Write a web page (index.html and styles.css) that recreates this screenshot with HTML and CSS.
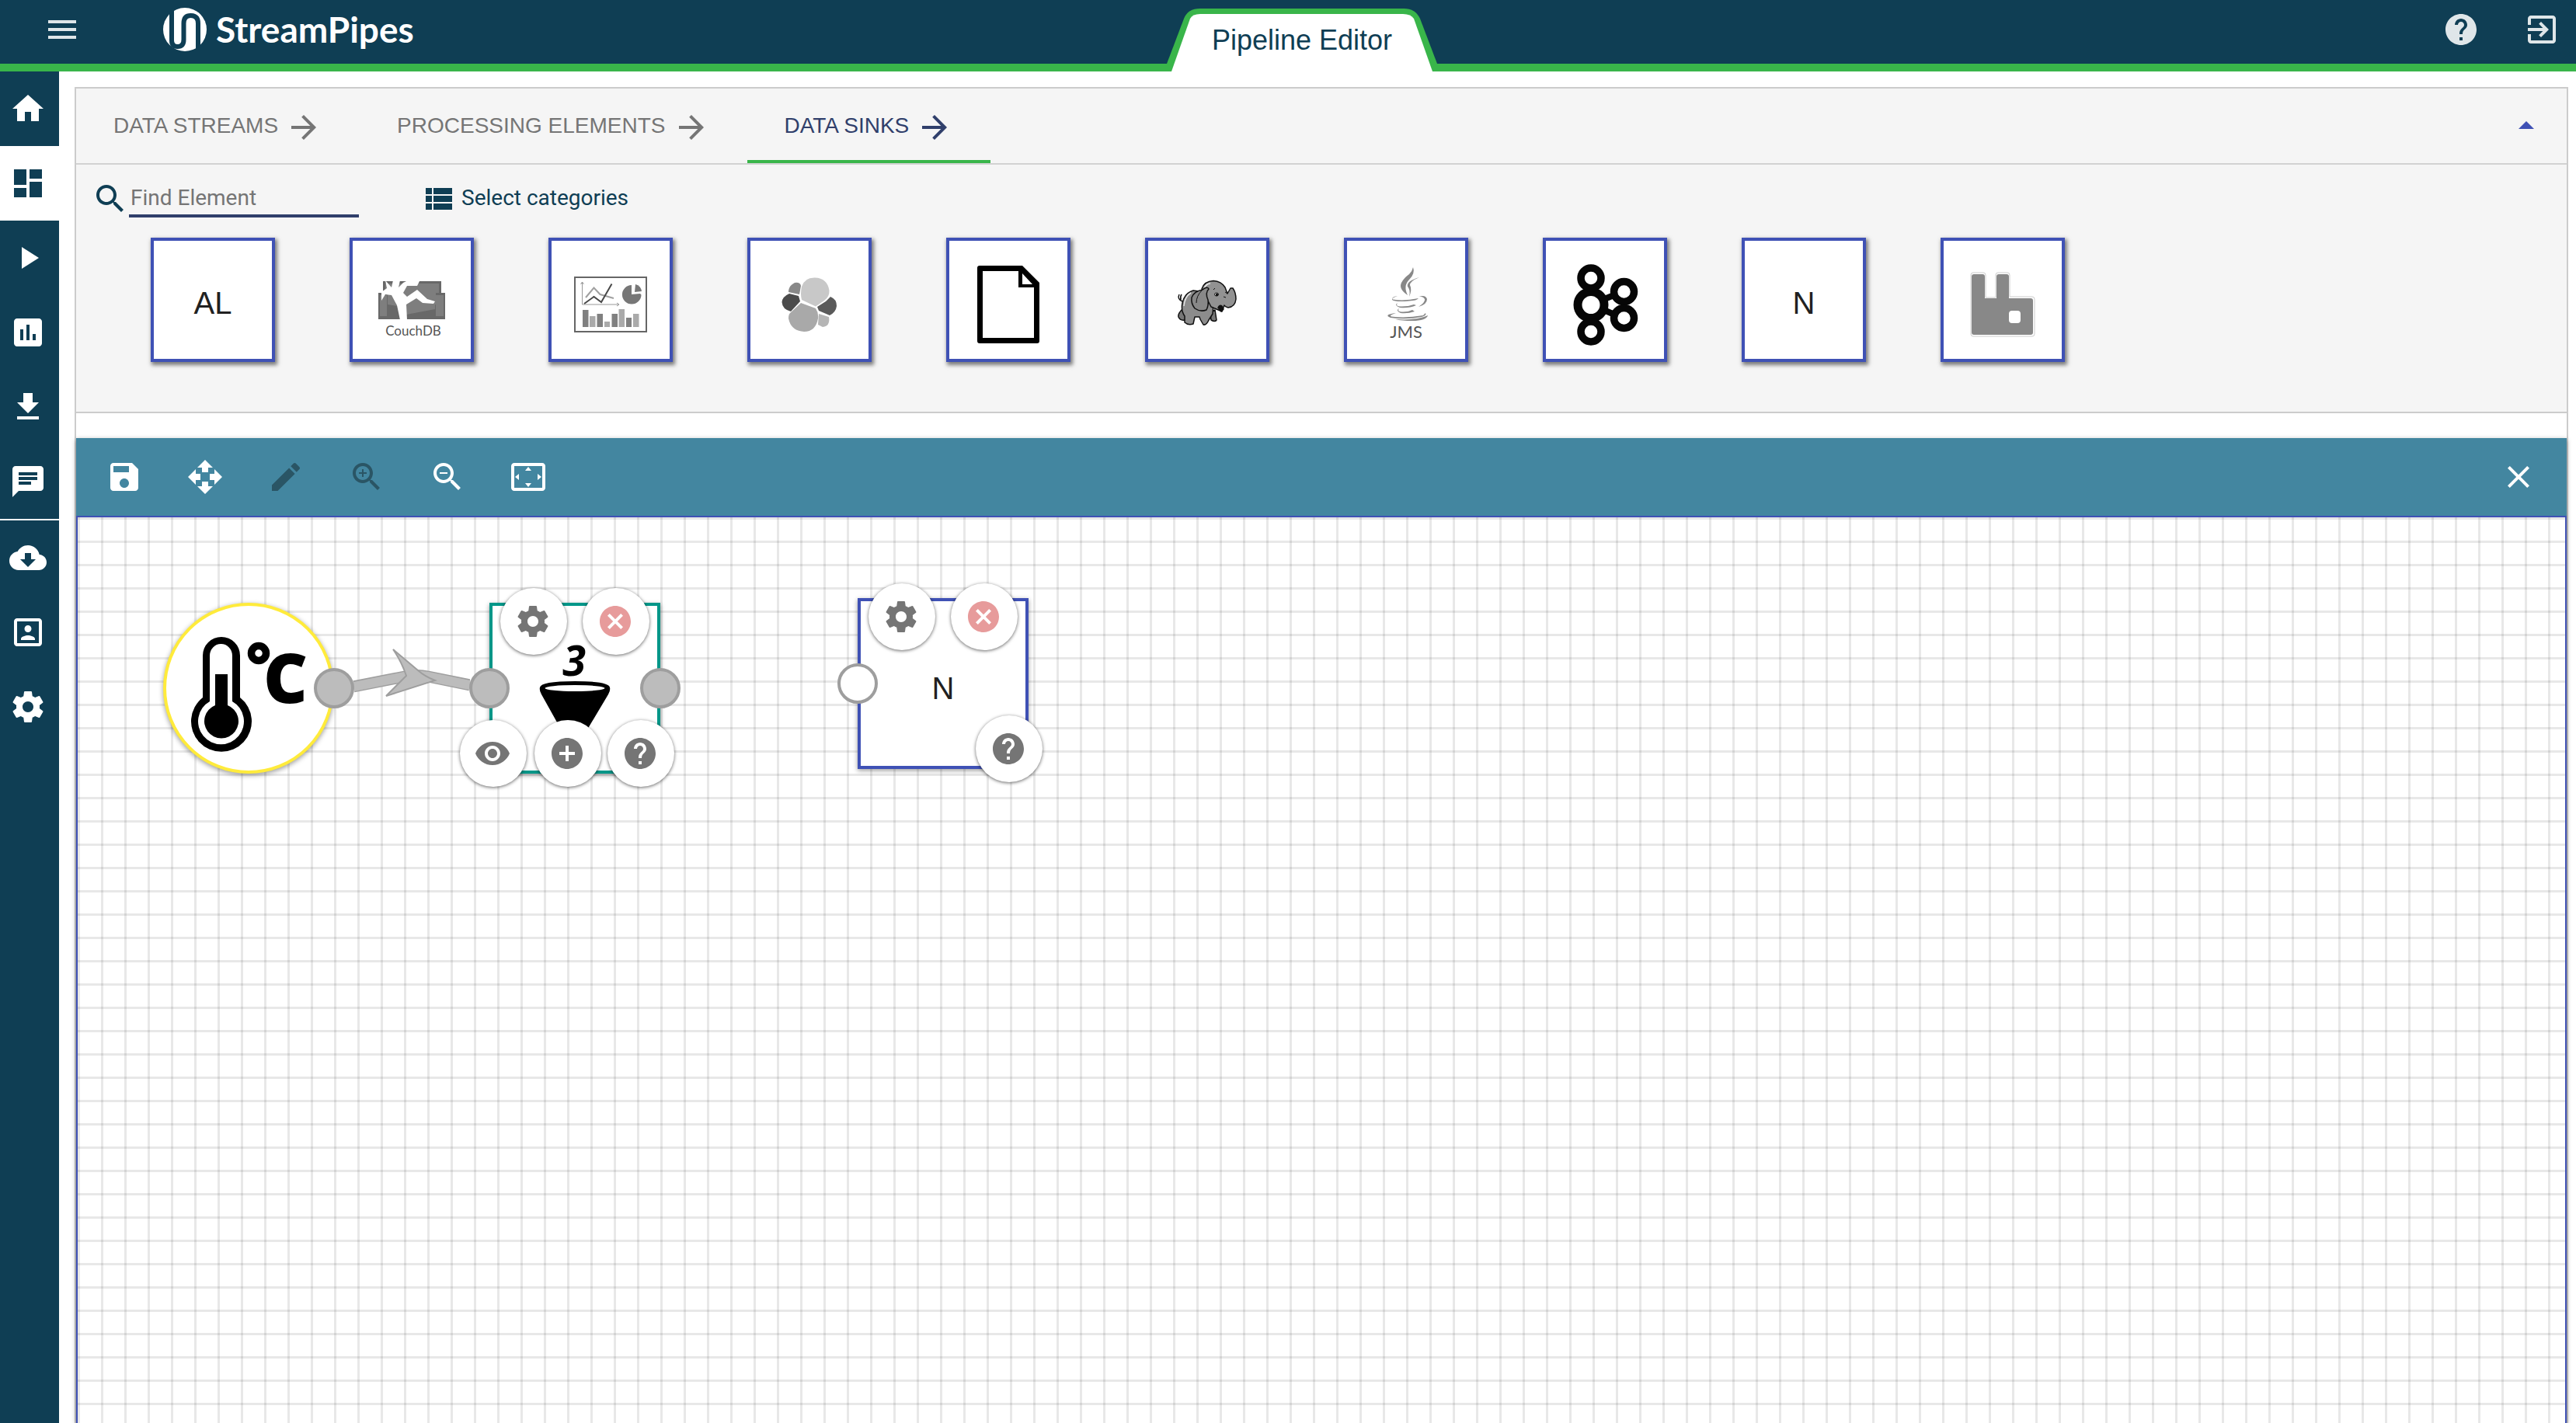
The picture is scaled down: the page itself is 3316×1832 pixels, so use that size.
FILE: index.html
```html
<!DOCTYPE html>
<html lang="en">
<head>
<meta charset="utf-8">
<title>StreamPipes - Pipeline Editor</title>
<link rel="stylesheet" href="styles.css">
</head>
<body>
<svg class="sprite" aria-hidden="true">
  <symbol id="i-gear" viewBox="0 0 24 24"><path d="M19.43 12.98c.04-.32.07-.64.07-.98s-.03-.66-.07-.98l2.11-1.65c.19-.15.24-.42.12-.64l-2-3.46c-.12-.22-.39-.3-.61-.22l-2.49 1c-.52-.4-1.08-.73-1.69-.98l-.38-2.65C14.46 2.18 14.25 2 14 2h-4c-.25 0-.46.18-.49.42l-.38 2.65c-.61.25-1.17.59-1.69.98l-2.49-1c-.23-.09-.49 0-.61.22l-2 3.46c-.13.22-.07.49.12.64l2.11 1.65c-.04.32-.07.65-.07.98s.03.66.07.98l-2.11 1.65c-.19.15-.24.42-.12.64l2 3.46c.12.22.39.3.61.22l2.49-1c.52.4 1.08.73 1.69.98l.38 2.65c.03.24.24.42.49.42h4c.25 0 .46-.18.49-.42l.38-2.65c.61-.25 1.17-.59 1.69-.98l2.49 1c.23.09.49 0 .61-.22l2-3.46c.12-.22.07-.49-.12-.64l-2.11-1.65zM12 15.5c-1.93 0-3.5-1.57-3.5-3.5s1.57-3.5 3.5-3.5 3.5 1.57 3.5 3.5-1.57 3.5-3.5 3.5z"/></symbol>
  <symbol id="i-help" viewBox="0 0 24 24"><path d="M12 2C6.48 2 2 6.48 2 12s4.480 10 10 10 10-4.480 10-10S17.520 2 12 2zm1 17h-2v-2h2v2zm2.070-7.750l-.9.920C13.450 12.900 13 13.500 13 15h-2v-.5c0-1.100.450-2.100 1.170-2.830l1.240-1.260c.370-.360.590-.860.590-1.410 0-1.100-.9-2-2-2s-2 .9-2 2H8c0-2.210 1.790-4 4-4s4 1.790 4 4c0 .880-.360 1.680-.930 2.250z"/></symbol>
  <symbol id="i-cancel" viewBox="0 0 24 24"><path d="M12 2C6.470 2 2 6.470 2 12s4.470 10 10 10 10-4.470 10-10S17.530 2 12 2zm5 13.590L15.590 17 12 13.410 8.410 17 7 15.590 10.590 12 7 8.410 8.410 7 12 10.590 15.590 7 17 8.410 13.410 12 17 15.590z"/></symbol>
  <symbol id="i-arrow" viewBox="0 0 24 24"><path d="M12 4l-1.410 1.410L16.170 11H4v2h12.170l-5.580 5.590L12 20l8-8z"/></symbol>
</svg>

<header class="topbar">
  <div class="brand">
    <button class="icon-btn" aria-label="Toggle menu"><svg class="icon" viewBox="0 0 24 24"><path d="M3 18h18v-2H3v2zm0-5h18v-2H3v2zm0-7v2h18V6H3z"/></svg></button>
    <a class="logo" href="#">
      <svg class="logo-mark" viewBox="0 0 56 56" aria-hidden="true">
        <circle cx="28" cy="28" r="28" fill="#fff"/>
        <path class="cut" d="M11 -2V42Q11 50 18.500 50 26.500 50 26.500 41V20Q26.500 10 35.500 10 45 10 45 20V58"/>
      </svg>
      <span class="logo-text">StreamPipes</span>
    </a>
  </div>
  <div class="page-tab">
    <svg class="page-tab-shape" viewBox="0 0 348 92" aria-hidden="true">
      <path fill="#39b54a" d="M0 82 22 24Q27 11 43 11H305Q320 11 326 24L348 82V92H0Z"/>
      <path fill="#fff" d="M6 92 30 24Q33 18 43 18H304Q314 18 318 24L342 92Z"/>
    </svg>
    <h1 class="page-title">Pipeline Editor</h1>
  </div>
  <div class="topbar-actions">
    <button class="icon-btn" aria-label="Help"><svg class="icon"><use href="#i-help"/></svg></button>
    <button class="icon-btn" aria-label="Log out"><svg class="icon" viewBox="0 0 24 24"><path d="M10.090 15.590L11.500 17l5-5-5-5-1.410 1.410L12.670 11H3v2h9.670l-2.580 2.590zM19 3H5c-1.110 0-2 .9-2 2v4h2V5h14v14H5v-4H3v4c0 1.100.890 2 2 2h14c1.100 0 2-.9 2-2V5c0-1.100-.9-2-2-2z"/></svg></button>
  </div>
</header>

<div class="shell">
  <nav class="sidebar" aria-label="Main">
    <a href="#" aria-label="Home"><svg class="icon" viewBox="0 0 24 24"><path d="M10 20v-6h4v6h5v-8h3L12 3 2 12h3v8z"/></svg></a>
    <a href="#" class="active" aria-label="Pipeline Editor"><svg class="icon" viewBox="0 0 24 24"><path d="M3 13h8V3H3v10zm0 8h8v-6H3v6zm10 0h8V11h-8v10zm0-18v6h8V3h-8z"/></svg></a>
    <a href="#" aria-label="Pipelines"><svg class="icon" viewBox="0 0 24 24"><path d="M8 5v14l11-7z"/></svg></a>
    <a href="#" aria-label="Dashboard"><svg class="icon" viewBox="0 0 24 24"><path d="M19 3H5c-1.100 0-2 .9-2 2v14c0 1.100.9 2 2 2h14c1.100 0 2-.9 2-2V5c0-1.100-.9-2-2-2zM9 17H7v-7h2v7zm4 0h-2V7h2v10zm4 0h-2v-4h2v4z"/></svg></a>
    <a href="#" aria-label="Downloads"><svg class="icon" viewBox="0 0 24 24"><path d="M19 9h-4V3H9v6H5l7 7 7-7zM5 18v2h14v-2H5z"/></svg></a>
    <a href="#" aria-label="Notifications"><svg class="icon" viewBox="0 0 24 24"><path d="M20 2H4c-1.100 0-1.990.9-1.990 2L2 22l4-4h14c1.100 0 2-.9 2-2V4c0-1.100-.9-2-2-2zM6 9h12v2H6V9zm8 5H6v-2h8v2zm4-6H6V6h12v2z"/></svg></a>
    <a href="#" class="divided" aria-label="Install"><svg class="icon" viewBox="0 0 24 24"><path d="M19.350 10.040C18.670 6.590 15.640 4 12 4 9.110 4 6.600 5.640 5.350 8.040 2.340 8.360 0 10.910 0 14c0 3.310 2.690 6 6 6h13c2.760 0 5-2.240 5-5 0-2.640-2.050-4.780-4.650-4.960zM17 13l-5 5-5-5h3V9h4v4h3z"/></svg></a>
    <a href="#" aria-label="My elements"><svg class="icon" viewBox="0 0 24 24"><path d="M19 3H5c-1.110 0-2 .9-2 2v14c0 1.100.890 2 2 2h14c1.100 0 2-.9 2-2V5c0-1.100-.9-2-2-2zm0 16H5V5h14v14zM12 12c1.240 0 2.250-1.010 2.250-2.250S13.240 7.500 12 7.500 9.750 8.510 9.750 9.750 10.760 12 12 12zm4.500 4.250c0-1.500-3-2.250-4.500-2.250s-4.500.750-4.500 2.250V17h9v-.750z"/></svg></a>
    <a href="#" aria-label="Settings"><svg class="icon"><use href="#i-gear"/></svg></a>
  </nav>

  <main class="editor">
    <section class="palette">
      <div class="tabs">
        <button class="tab">DATA STREAMS <svg class="icon"><use href="#i-arrow"/></svg></button>
        <button class="tab">PROCESSING ELEMENTS <svg class="icon"><use href="#i-arrow"/></svg></button>
        <button class="tab selected">DATA SINKS <svg class="icon"><use href="#i-arrow"/></svg></button>
        <button class="icon-btn collapse" aria-label="Collapse"><svg class="icon" viewBox="0 0 24 24"><path d="M7 14l5-5 5 5z"/></svg></button>
      </div>
      <div class="filters">
        <label for="find" aria-label="Find Element"><svg class="icon" viewBox="0 0 24 24"><path d="M15.500 14h-.790l-.280-.270C15.410 12.590 16 11.110 16 9.500 16 5.910 13.090 3 9.500 3S3 5.910 3 9.500 5.910 16 9.500 16c1.610 0 3.090-.590 4.230-1.570l.270.280v.790l5 4.990L20.490 19l-4.990-5zm-6 0C7.010 14 5 11.990 5 9.500S7.010 5 9.500 5 14 7.010 14 9.500 11.990 14 9.500 14z"/></svg></label>
        <input id="find" class="find" type="text" placeholder="Find Element">
        <button class="categories"><svg class="icon" viewBox="0 0 24 24"><path d="M4 14h4v-4H4v4zm0 5h4v-4H4v4zM4 9h4V5H4v4zm5 5h12v-4H9v4zm0 5h12v-4H9v4zM9 5v4h12V5H9z"/></svg><span>Select categories</span></button>
      </div>
      <div class="elements">
        <button class="element">AL</button>
        <button class="element" aria-label="CouchDB">
          <svg viewBox="4 4 152 152">
            <path fill="#686868" d="M43 56H118V71H123V105H37V71H43Z"/>
            <path fill="#7e7e7e" d="M46 59H115V71H111V86L73 90V76L90 62 104 79 110 84V92L73 99V90L49 86V73H46ZM39 74H48V101H39ZM111 74H121V101H111Z"/>
            <path fill="#fff" d="M46 55 54 64 56 55H65L63 64 69 58 77 54 90 56 87 62 74 62 69 71 74 76 87 67 100 79 110 82 108 85 94 84 86 78 73 86 74 106H65L61 87 54 74 46 73 41 81V70L48 65Z"/>
            <text x="82" y="126" text-anchor="middle" class="caption couch">CouchDB</text>
          </svg>
        </button>
        <button class="element" aria-label="Dashboard sink">
          <svg viewBox="4 4 152 152" fill="none">
            <rect x="34" y="51" width="92" height="70" stroke="#666" stroke-width="2"/>
            <path d="M43.500 57V86H91M41.500 60l2-3 2 3M88 84l3 2-3 2" stroke="#999" stroke-width="1"/>
            <path d="M48 77 58.500 64.500 66.500 73 84 78" stroke="#a0a0a0" stroke-width="2"/>
            <path d="M46 85 58.500 76 68 83 81.500 59.500" stroke="#484848" stroke-width="2"/>
            <path fill="#777" d="M107 73V61A12.300 12.300 0 1 0 119.500 73.500L118 72Z"/>
            <path fill="#777" d="M111 70 112 60A11 11 0 0 1 120 69Z"/>
            <path fill="#808080" d="M44 93h7.500v22H44zM62.500 98H70v17h-7.500zM81.500 98H89v17h-7.500zM100 103h7v12h-7z"/>
            <path fill="#aaa" d="M53 101h7.500v14H53zM72 108h7v7h-7zM90.500 92H98v23h-7.500zM109 98h7.500v17H109z"/>
          </svg>
        </button>
        <button class="element" aria-label="Elasticsearch">
          <svg viewBox="4 4 152 152">
            <path fill="#c8c8c8" d="M70 63Q74 51 87 51.500 103 52 105.500 68 106 76 99 81L88 88.500 70 80Q68 72 70 63Z"/>
            <path fill="#a9a9a9" d="M69 84 88 91Q92 97 91 104 88 121 73 121 56 120 53 104 53 99 55 97Z"/>
            <path fill="#4b4b4b" d="M54 72 66 75 68 82 56 95Q45 92 44.500 83 45 76 54 72Z"/>
            <path fill="#5a5a5a" d="M107 76Q115 79 115 88 114 96 106 100L92 94 90 89 101 82Z"/>
            <path fill="#888" d="M53 70Q53 62 61 58 68 57 69 62L67 73Z"/>
            <path fill="#b5b5b5" d="M92 98 105 102Q107 114 97 115L91 112Z"/>
          </svg>
        </button>
        <button class="element" aria-label="File">
          <svg viewBox="4 4 152 152"><path fill-rule="evenodd" d="M43 36H98L120 58V133Q120 136 117 136H43Q40 136 40 133V39Q40 36 43 36ZM47 43V129H113V64H93V43ZM98 46V60H111Z"/></svg>
        </button>
        <button class="element" aria-label="Hadoop">
          <svg viewBox="4 4 152 152" stroke="#111" stroke-width="1.500" stroke-linejoin="round">
            <path fill="none" d="M48 82Q41 79 44 73M46 80Q45 76 47 73"/>
            <path fill="#777" d="M48 92Q42 98 43 102 45 107 51 106L56 96ZM84 96 85 106Q90 109 92 106L90 93Z"/>
            <path fill="#8c8c8c" d="M62 68Q51 71 48 84 46 94 51 101L51 109Q55 113 62 111L64 102H70L71 105 75 112Q79 113 82 106L87 98 88 86 76 70Z"/>
            <path fill="none" stroke="#e4e4e4" d="M59 71Q51 76 50 88"/>
            <path fill="#929292" d="M73 66Q76 56 88 55.500 98 56 103 64L106 72 110 65 113 65Q117 71 117 79 116 89 107 90 103 89 102 87L99 95 92 92 85 89Z"/>
            <path fill="none" stroke="#eee" d="M76 65Q79 59 84 59"/>
            <path fill="#888" d="M74 67Q80 62 82 66 77 71 81 80 82 87 79 93 71 96 64 91 59 85 60 77 63 69 74 67Z"/>
            <path fill="none" stroke-width="1" d="M73 68Q66 75 66 84M88 67l2-2M103 70l3 2M101 76l3 1"/>
            <ellipse cx="92" cy="73" rx="2.500" ry="2" fill="#fff" stroke-width="1"/><circle cx="92.500" cy="73.500" r="1" fill="#111"/>
            <path fill="#111" d="M94 90Q96 86 99 88L101 92 98 95Z"/>
          </svg>
        </button>
        <button class="element" aria-label="JMS">
          <svg viewBox="4 4 152 152" fill="#888">
            <path d="M89 38Q92 46 84 54 76 62 82 74 70 66 74 58 77 52 84 47 88 43 89 38Z"/>
            <path d="M97 51Q85 56 85 61 88 67 84 76 86 67 82 63 80 56 97 51Z"/>
            <path d="M69 75Q60 78 63 79.500 78 82 96 78 94 81 84 81.500 66 83 62 80 61 76 69 75ZM96 76Q105 73 107 79 107 86 96 89 105 83 104 79 101 75 96 76Z"/>
            <path d="M69 84Q66 88 72 88.500 82 89 90 86L93 87Q84 91 72 90 64 87 69 84ZM71 91Q68 95 74 95.500 82 96 88 93L91 95Q82 98 73 97 66 94 71 91Z"/>
            <path d="M67 97Q57 100 61 101.500 80 104 102 100L105 97Q107 100 100 102 80 106 60 103 50 99 67 97ZM108 100Q106 107 88 107 74 107 66 105 94 107 108 100Z"/>
            <text x="80" y="129" text-anchor="middle" class="caption jms">JMS</text>
          </svg>
        </button>
        <button class="element" aria-label="Kafka">
          <svg viewBox="4 4 152 152" fill="#fff" stroke="#060606">
            <path d="M62 52V121M62 86 104 69M62 86 104 104" stroke-width="8"/>
            <circle cx="62" cy="86.500" r="17" stroke-width="11"/>
            <g stroke-width="9.500"><circle cx="62" cy="52" r="13"/><circle cx="62" cy="121" r="13"/><circle cx="104.500" cy="69.500" r="13"/><circle cx="104.500" cy="103.500" r="13"/></g>
          </svg>
        </button>
        <button class="element">N</button>
        <button class="element" aria-label="RabbitMQ">
          <svg viewBox="4 4 152 152">
            <path fill="#fff" stroke="#ccc" stroke-width="1" d="M42 45H55Q58 45 58 48V77H71V48Q71 45 74 45H86Q89 45 89 48V76H118Q121 76 121 79V124Q121 127 118 127H42Q39 127 39 124V48Q39 45 42 45Z"/>
            <path fill="#888" fill-rule="evenodd" d="M43 47H54Q57 47 57 50V78H72V50Q72 47 75 47H85Q88 47 88 50V78H116Q119 78 119 81V122Q119 125 116 125H43Q40 125 40 122V50Q40 47 43 47ZM92 94Q88 94 88 98V106Q88 110 92 110H99Q103 110 103 106V98Q103 94 99 94Z"/>
          </svg>
        </button>
      </div>
    </section>

    <section class="workspace">
      <div class="toolbar">
        <button aria-label="Save"><svg class="icon" viewBox="0 0 24 24"><path fill-rule="evenodd" d="M17 3H5c-1.110 0-2 .9-2 2v14c0 1.100.890 2 2 2h14c1.100 0 2-.9 2-2V7l-4-4zm-5 16c-1.660 0-3-1.340-3-3s1.340-3 3-3 3 1.340 3 3-1.340 3-3 3zm3-10H5V5h10v4z"/></svg></button>
        <button aria-label="Move"><svg class="icon" viewBox="0 0 24 24"><path d="M10 9h4V6h3l-5-5-5 5h3v3zm-1 1H6V7l-5 5 5 5v-3h3v-4zm14 2l-5-5v3h-3v4h3v3l5-5zm-9 3h-4v3H7l5 5 5-5h-3v-3z"/></svg></button>
        <button disabled aria-label="Edit"><svg class="icon" viewBox="0 0 24 24"><path d="M3 17.250V21h3.750L17.810 9.940l-3.750-3.750L3 17.250zM20.710 7.040c.390-.390.390-1.020 0-1.410l-2.340-2.340c-.390-.390-1.020-.390-1.410 0l-1.830 1.830 3.750 3.750 1.830-1.830z"/></svg></button>
        <button disabled aria-label="Zoom in"><svg class="icon" viewBox="0 0 24 24"><path d="M15.500 14h-.790l-.280-.270C15.410 12.590 16 11.110 16 9.500 16 5.910 13.090 3 9.500 3S3 5.910 3 9.500 5.910 16 9.500 16c1.610 0 3.090-.590 4.230-1.570l.270.280v.790l5 4.990L20.490 19l-4.990-5zm-6 0C7.010 14 5 11.990 5 9.500S7.010 5 9.500 5 14 7.010 14 9.500 11.990 14 9.500 14zM12 10h-2v2H9v-2H7V9h2V7h1v2h2v1z"/></svg></button>
        <button aria-label="Zoom out"><svg class="icon" viewBox="0 0 24 24"><path d="M15.500 14h-.790l-.280-.270C15.410 12.590 16 11.110 16 9.500 16 5.910 13.090 3 9.500 3S3 5.910 3 9.500 5.910 16 9.500 16c1.610 0 3.090-.590 4.230-1.570l.270.280v.790l5 4.990L20.490 19l-4.990-5zm-6 0C7.010 14 5 11.990 5 9.500S7.010 5 9.500 5 14 7.010 14 9.500 11.990 14 9.500 14zM7 9h5v1H7z"/></svg></button>
        <button aria-label="Auto layout"><svg class="icon" viewBox="0 0 24 24"><path d="M12.010 5.500L10 8h4l-1.990-2.500zM18 10v4l2.500-1.990L18 10zM6 10l-2.500 2.010L6 14v-4zm8 6h-4l2.010 2.500L14 16zm7-13H3c-1.100 0-2 .9-2 2v14c0 1.100.9 2 2 2h18c1.100 0 2-.9 2-2V5c0-1.100-.9-2-2-2zm0 16.010H3V4.990h18v14.020z"/></svg></button>
        <button class="clear" aria-label="Clear"><svg class="icon" viewBox="0 0 24 24"><path d="M19 6.410L17.590 5 12 10.590 6.410 5 5 6.410 10.590 12 5 17.590 6.410 19 12 13.410 17.590 19 19 17.590 13.410 12z"/></svg></button>
      </div>
      <div class="canvas">
        <div class="node stream">
          <svg viewBox="0 0 220 220">
            <path d="M51 68a24 24 0 0 1 48 0V122A39 39 0 1 1 51 122Z"/>
            <path fill="#fff" d="M60 68a14.500 15 0 0 1 29 0V127A29.500 29.500 0 1 1 60 127Z"/>
            <path d="M67 92H83V132A22 22 0 1 1 67 132Z"/>
            <circle cx="123" cy="65" r="9.500" fill="none" stroke="#000" stroke-width="9.500"/>
            <text x="129" y="129" class="celsius">C</text>
          </svg>
          <span class="port out used"></span>
        </div>
        <div class="node processor">
          <svg viewBox="0 0 220 220">
            <text x="109" y="94" text-anchor="middle" class="three">3</text>
            <path d="M65 109Q66 101 110 101T155 109Q156 113 153 118L122 170H96L67 118Q64 113 65 109Z"/>
            <ellipse cx="110" cy="110" rx="38.500" ry="4" fill="#fff"/>
          </svg>
          <span class="port in used"></span>
          <span class="port out used"></span>
          <button class="option configure" aria-label="Configure"><svg class="icon"><use href="#i-gear"/></svg></button>
          <button class="option remove" aria-label="Delete"><svg class="icon"><use href="#i-cancel"/></svg></button>
          <button class="option preview" aria-label="Possible elements"><svg class="icon" viewBox="0 0 24 24"><path d="M12 4.500C7 4.500 2.730 7.610 1 12c1.730 4.390 6 7.500 11 7.500s9.270-3.110 11-7.500c-1.730-4.390-6-7.500-11-7.500zM12 17c-2.760 0-5-2.240-5-5s2.240-5 5-5 5 2.240 5 5-2.240 5-5 5zm0-8c-1.660 0-3 1.340-3 3s1.340 3 3 3 3-1.340 3-3-1.340-3-3-3z"/></svg></button>
          <button class="option add" aria-label="Add element"><svg class="icon" viewBox="0 0 24 24"><path d="M12 2C6.480 2 2 6.480 2 12s4.480 10 10 10 10-4.480 10-10S17.520 2 12 2zm5 11h-4v4h-2v-4H7v-2h4V7h2v4h4v2z"/></svg></button>
          <button class="option info" aria-label="Help"><svg class="icon"><use href="#i-help"/></svg></button>
        </div>
        <div class="node sink">
          <span class="node-name">N</span>
          <span class="port in"></span>
          <button class="option configure" aria-label="Configure"><svg class="icon"><use href="#i-gear"/></svg></button>
          <button class="option remove" aria-label="Delete"><svg class="icon"><use href="#i-cancel"/></svg></button>
          <button class="option info" aria-label="Help"><svg class="icon"><use href="#i-help"/></svg></button>
        </div>
        <svg class="link" viewBox="0 0 150 80" aria-hidden="true">
          <path d="M0 54 66 41Q81 38 96 41L150 52" fill="none" stroke="#9e9e9e" stroke-width="15"/>
          <path d="M0 54 66 41Q81 38 96 41L150 52" fill="none" stroke="#bcbcbc" stroke-width="12"/>
          <path d="M51 6 83 33Q92 41 105 46L42 66 68 40Q62 22 51 6Z" fill="#bcbcbc" stroke="#9e9e9e" stroke-width="2"/>
        </svg>
      </div>
    </section>
  </main>
</div>
</body>
</html>
```
FILE: styles.css
```css
* { box-sizing: border-box; }

:root {
  --navy: #0f3e54;
  --green: #39b54a;
  --indigo: #3f51b5;
  --line: #ccc;
}

body {
  margin: 0;
  min-height: 100vh;
  display: flex;
  flex-direction: column;
  background: #fff;
  color: #212121;
  font-family: Roboto, "Liberation Sans", sans-serif;
  font-size: 28px;
}

button {
  margin: 0;
  padding: 0;
  border: 0;
  background: none;
  color: inherit;
  font: inherit;
  cursor: pointer;
}

.sprite { display: none; }

.icon {
  display: block;
  flex: none;
  width: 48px;
  height: 48px;
  fill: currentColor;
}

/* Top bar */
.topbar {
  display: grid;
  grid-template-columns: 1fr auto 1fr;
  height: 92px;
  padding-left: 36px;
  background: var(--navy);
  border-bottom: 10px solid var(--green);
  color: rgba(255, 255, 255, .87);
}

.brand {
  display: flex;
  align-items: center;
  height: 76px;
  padding-left: 20px;
}

.logo {
  display: flex;
  align-items: center;
  gap: 12px;
  margin-left: 106px;
  color: #fff;
  text-decoration: none;
}

.logo-mark {
  width: 56px;
  height: 56px;
}

.logo-mark .cut {
  fill: none;
  stroke: var(--navy);
  stroke-width: 6;
}

.logo-text {
  font: bold 46px/56px Lato, sans-serif;
}

.page-tab {
  position: relative;
  width: 348px;
  height: 92px;
}

.page-tab-shape {
  position: absolute;
  inset: 0;
}

.page-title {
  position: relative;
  margin: 0;
  color: var(--navy);
  font: 36px/104px "Liberation Sans", sans-serif;
  text-align: center;
}

.topbar-actions {
  display: flex;
  justify-content: flex-end;
  align-items: center;
  gap: 56px;
  height: 76px;
  padding-right: 20px;
}

/* Side navigation */
.shell {
  display: flex;
  flex: 1;
}

.sidebar {
  flex: none;
  width: 76px;
  background: var(--navy);
}

.sidebar a {
  display: flex;
  align-items: center;
  height: 96px;
  padding-left: 12px;
  color: #fff;
}

.sidebar .active {
  background: #fff;
  color: var(--navy);
}

.sidebar .divided {
  height: 98px;
  border-top: 2px solid #fff;
}

/* Editor */
.editor {
  display: flex;
  flex: 1;
  flex-direction: column;
  min-width: 0;
  margin: 20px 10px 0 20px;
  border: 2px solid var(--line);
  border-bottom: 0;
}

.palette {
  background: #f5f5f5;
  border-bottom: 2px solid var(--line);
}

.tabs {
  display: flex;
  align-items: center;
  height: 98px;
  border-bottom: 2px solid #d2d2d2;
}

.tab {
  display: flex;
  align-items: center;
  gap: 9px;
  height: 96px;
  padding: 0 48px;
  color: #757575;
  font-family: "Liberation Sans", sans-serif;
}

.tab .icon { margin-top: 4px; }

.tab.selected {
  color: #303f6b;
  box-shadow: inset 0 -4px var(--green);
}

.collapse {
  margin: 0 28px 0 auto;
  color: var(--indigo);
}

.filters {
  display: flex;
  padding: 20px 20px 26px;
  color: var(--navy);
}

.find {
  width: 296px;
  height: 48px;
  padding: 0 2px;
  border: 0;
  border-bottom: 4px solid #303f6b;
  outline: 0;
  background: none;
  color: var(--navy);
  font: inherit;
}

.find::placeholder { color: #757575; }

.categories {
  display: flex;
  gap: 6px;
  margin-left: 78px;
  line-height: 46px;
}

.elements {
  display: flex;
  flex-wrap: wrap;
  gap: 64px 96px;
  padding: 0 96px 64px;
}

.element {
  width: 160px;
  height: 160px;
  background: #fff;
  border: 4px solid var(--indigo);
  box-shadow: 2px 3px 5px 1px rgba(0, 0, 0, .5);
  font: 40px/160px "Liberation Sans", sans-serif;
}

.element svg {
  display: block;
  width: 152px;
  height: 152px;
}

.caption {
  fill: #555;
  stroke: none;
  font-family: Lato, sans-serif;
}

.couch { font-size: 17px; }
.jms { font-size: 22px; }

/* Workspace */
.workspace {
  display: flex;
  flex: 1;
  flex-direction: column;
  margin-top: 32px;
  box-shadow: 0 2px 6px rgba(0, 0, 0, .4);
}

.toolbar {
  display: flex;
  padding: 0 10px;
  background: #4386a0;
  color: #fff;
}

.toolbar button { padding: 26px 28px; }
.toolbar button:disabled { color: #2a5565; }
.toolbar .clear { margin-left: auto; }

.canvas {
  position: relative;
  flex: 1;
  min-height: 1000px;
  border: 2px solid var(--indigo);
  border-bottom: 0;
  background-color: #fff;
  background-image:
    linear-gradient(rgba(0, 0, 0, .09) 3px, transparent 3px),
    linear-gradient(90deg, rgba(0, 0, 0, .09) 3px, transparent 3px);
  background-size: 30px 30px;
}

/* Pipeline nodes, placed freely on the canvas */
.node {
  position: absolute;
  display: flex;
  align-items: center;
  justify-content: center;
  width: 220px;
  height: 220px;
  background: #fff;
  border: 4px solid;
  box-shadow: 0 2px 6px rgba(0, 0, 0, .4);
}

.node > svg {
  flex: none;
  width: 220px;
  height: 220px;
}

.stream {
  left: 110px;
  top: 110px;
  border-color: #ffeb3b;
  border-radius: 50%;
}

.processor {
  left: 530px;
  top: 110px;
  border-color: #009688;
}

.sink {
  left: 1004px;
  top: 104px;
  border-color: var(--indigo);
}

.node-name {
  padding-top: 12px;
  color: #212121;
  font: 40px "Liberation Sans", sans-serif;
}

.celsius { font: 800 88px "Open Sans", sans-serif; }
.three { font: italic bold 54px "Open Sans", sans-serif; }

.port {
  position: absolute;
  top: 80px;
  z-index: 2;
  width: 52px;
  height: 52px;
  border: 4px solid #9e9e9e;
  border-radius: 50%;
  background: #fff;
}

.port.in { left: -30px; }
.port.out { right: -30px; }
.port.used { background: #bcbcbc; }

.option {
  position: absolute;
  z-index: 3;
  width: 86px;
  height: 86px;
  padding: 18px;
  border-radius: 50%;
  background: #fff;
  box-shadow: 0 1px 4px rgba(0, 0, 0, .6);
  color: #757575;
}

.configure { left: 10px; top: -23px; }
.remove { left: 116px; top: -23px; color: #e79b9b; }
.preview { left: -42px; top: 147px; }
.add { left: 54px; top: 147px; }
.info { left: 148px; top: 147px; }

.link {
  position: absolute;
  left: 355px;
  top: 164px;
  z-index: 1;
  width: 150px;
  height: 80px;
}
```
